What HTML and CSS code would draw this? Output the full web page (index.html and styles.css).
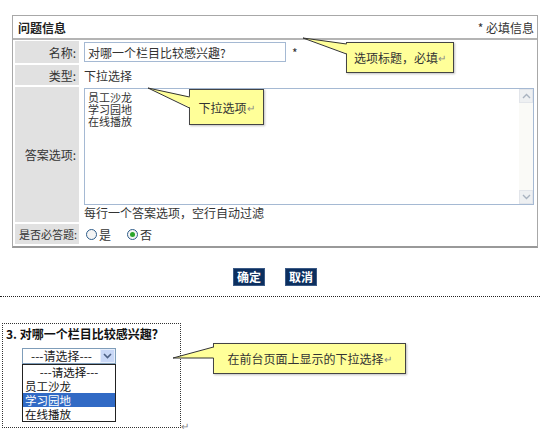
FILE: index.html
```html
<!DOCTYPE html>
<html lang="zh-CN">
<head>
    <meta charset="UTF-8">
    <title>问题信息</title>
    <link rel="stylesheet" href="styles.css">
</head>
<body>
    <div class="page">
        <div class="panel">
            <div class="panel-head">
                <span class="panel-title">问题信息</span>
                <span class="panel-note">* 必填信息</span>
            </div>
            <div class="form-grid">
                <div class="label">名称:</div>
                <div class="value">
                    <input class="text-input" type="text" value="对哪一个栏目比较感兴趣?">
                    <span class="req">*</span>
                </div>

                <div class="label">类型:</div>
                <div class="value">下拉选择</div>

                <div class="label">答案选项:</div>
                <div class="value value-area">
                    <div class="textarea">
                        <div class="textarea-text">
                            <div class="line">员工沙龙</div>
                            <div class="line">学习园地</div>
                            <div class="line">在线播放</div>
                        </div>
                        <div class="scrollbar">
                            <span class="scroll-btn">
                                <svg width="9" height="6" viewBox="0 0 9 6"><path d="M1 5 L4.5 1.5 L8 5" fill="none" stroke="#a9b3c0" stroke-width="1.4"/></svg>
                            </span>
                            <span class="scroll-track"></span>
                            <span class="scroll-btn">
                                <svg width="9" height="6" viewBox="0 0 9 6"><path d="M1 1 L4.5 4.5 L8 1" fill="none" stroke="#a9b3c0" stroke-width="1.4"/></svg>
                            </span>
                        </div>
                    </div>
                    <div class="hint">每行一个答案选项，空行自动过滤</div>
                </div>

                <div class="label label-long">是否必答题:</div>
                <div class="value radios">
                    <span class="radio"></span><span class="radio-text">是</span>
                    <span class="radio checked"></span><span class="radio-text">否</span>
                </div>
            </div>
        </div>

        <div class="actions">
            <button class="btn">确定</button>
            <button class="btn">取消</button>
        </div>

        <div class="divider"></div>

        <div class="preview">
            <div class="preview-title">3. 对哪一个栏目比较感兴趣？</div>
            <div class="select">
                <span class="select-text">---请选择---</span>
                <span class="select-arrow">
                    <svg width="9" height="6" viewBox="0 0 9 6"><path d="M1 1 L4.5 4.5 L8 1" fill="none" stroke="#4d6185" stroke-width="1.6"/></svg>
                </span>
            </div>
            <ul class="select-list">
                <li>---请选择---</li>
                <li>员工沙龙</li>
                <li class="selected">学习园地</li>
                <li>在线播放</li>
            </ul>
        </div>
        <span class="para-mark">↵</span>

        <!-- callouts -->
        <div class="callout callout-title">选项标题，必填<span class="mark">↵</span></div>
        <div class="callout callout-options">下拉选项<span class="mark">↵</span></div>
        <div class="callout callout-front">在前台页面上显示的下拉选择<span class="mark">↵</span></div>
        <svg class="pointers" width="540" height="433" viewBox="0 0 540 433">
            <polygon points="303,38 348,44 348,54" fill="#ffff99"/>
            <polyline points="346.5,44 303,38 346.5,54" fill="none" stroke="#333" stroke-width="1"/>
            <polygon points="148,88 191,97 191,108" fill="#ffff99"/>
            <polyline points="189.5,97 148,88 189.5,108" fill="none" stroke="#333" stroke-width="1"/>
            <polygon points="173,358 215,347 215,358" fill="#ffff99"/>
            <polyline points="213.5,347 173,358 213.5,358" fill="none" stroke="#333" stroke-width="1"/>
        </svg>
    </div>
</body>
</html>
```

FILE: styles.css
```css
body {
    margin: 0;
    font-family: "Noto Sans CJK SC", "Liberation Sans", sans-serif;
    font-size: 12px;
    color: #333;
    background: #fff;
}

.page {
    position: relative;
    width: 540px;
    height: 433px;
    padding-top: 15px;
    box-sizing: border-box;
    overflow: hidden;
}

/* form panel */
.panel {
    margin-left: 12px;
    width: 526px;
    box-sizing: border-box;
    border: 1px solid #a8a8a8;
    border-bottom: 2px solid #999;
}

.panel-head {
    display: flex;
    justify-content: space-between;
    align-items: center;
    height: 22px;
    padding: 0 3px 0 5px;
    border-bottom: 2px solid #b4b4b4;
}

.panel-title {
    font-weight: bold;
    color: #222;
}

.form-grid {
    display: grid;
    grid-template-columns: 64px 1fr;
    grid-template-rows: 22px 20px 135px 20px;
    gap: 2px;
    padding: 1px 2px 2px;
}

.label {
    background: #e1e1e1;
    display: flex;
    align-items: center;
    justify-content: flex-end;
    padding-right: 3px;
    white-space: nowrap;
}

.label-long {
    font-size: 11px;
    padding-right: 2px;
}

.value {
    display: flex;
    align-items: center;
    padding-left: 3px;
}

.text-input {
    width: 202px;
    height: 20px;
    box-sizing: border-box;
    border: 1px solid #a5b9d3;
    padding: 0 3px;
    font: inherit;
    color: #333;
    outline: none;
}

.req {
    margin-left: 6px;
}

.value-area {
    flex-direction: column;
    align-items: flex-start;
    padding-top: 1px;
}

.textarea {
    display: flex;
    width: 450px;
    height: 117px;
    box-sizing: border-box;
    border: 1px solid #a5b9d3;
}

.textarea-text {
    flex: 1;
    padding: 2px 3px;
    font-size: 11px;
}

.textarea-text .line {
    height: 12px;
    line-height: 12px;
}

.scrollbar {
    width: 14px;
    display: flex;
    flex-direction: column;
    background: #fafaf7;
}

.scroll-btn {
    height: 14px;
    display: flex;
    align-items: center;
    justify-content: center;
    background: #eef0f2;
    border: 1px solid #e2e5ea;
    box-sizing: border-box;
}

.scroll-track {
    flex: 1;
}

.hint {
    margin-top: 1px;
    line-height: 14px;
}

.radios {
    gap: 2px;
}

.radio {
    width: 11px;
    height: 11px;
    box-sizing: border-box;
    border: 1px solid #2f5d8a;
    border-radius: 50%;
    background: #f4f4f4;
    display: flex;
    align-items: center;
    justify-content: center;
    margin-left: 2px;
}

.radio.checked::after {
    content: "";
    width: 5px;
    height: 5px;
    border-radius: 50%;
    background: #2aa52a;
}

.radio-text {
    margin-right: 12px;
}

/* buttons */
.actions {
    display: flex;
    gap: 20px;
    padding-left: 233px;
    margin-top: 20px;
}

.btn {
    height: 18px;
    width: 32px;
    padding: 0;
    border: 1px solid #3b5a86;
    background: #0c2f5f;
    color: #fff;
    font: bold 12px "Noto Sans CJK SC", sans-serif;
    line-height: 16px;
}

.divider {
    margin-top: 10px;
    border-top: 1px dotted #222;
}

/* front-end preview */
.preview {
    margin: 26px 0 0 2px;
    width: 179px;
    height: 105px;
    box-sizing: border-box;
    border: 1px dotted #333;
    padding: 2px 0 0 3px;
}

.preview-title {
    font-weight: bold;
    color: #111;
    line-height: 16px;
}

.select {
    display: flex;
    margin: 6px 0 0 16px;
    width: 94px;
    height: 16px;
    box-sizing: border-box;
    border: 1px solid #7f9db9;
}

.select-text {
    flex: 1;
    text-align: center;
    line-height: 14px;
    color: #222;
}

.select-arrow {
    width: 15px;
    display: flex;
    align-items: center;
    justify-content: center;
    background: #c9d8f7;
    border: 1px solid #e6eefc;
    box-sizing: border-box;
}

.select-list {
    list-style: none;
    margin: 0 0 0 16px;
    padding: 0;
    width: 94px;
    box-sizing: border-box;
    border: 1px solid #222;
    color: #111;
    font-size: 11.5px;
}

.select-list li {
    height: 14px;
    line-height: 14px;
    padding-left: 2px;
}

.select-list li:first-child {
    text-align: center;
    padding-left: 0;
}

.select-list .selected {
    background: #316ac5;
    color: #fff;
}

.para-mark {
    position: absolute;
    left: 181px;
    top: 418px;
    font-size: 10px;
    color: #888;
}

/* callout boxes */
.callout {
    position: absolute;
    box-sizing: border-box;
    background: #ffff99;
    border: 1px solid #444;
    box-shadow: 1px 1px 2px rgba(0, 0, 0, 0.25);
    display: flex;
    align-items: center;
    justify-content: center;
    color: #333;
    white-space: nowrap;
}

.callout .mark {
    font-size: 10px;
    color: #888;
}

.callout-title {
    left: 346px;
    top: 42px;
    width: 108px;
    height: 31px;
}

.callout-options {
    left: 189px;
    top: 89px;
    width: 75px;
    height: 36px;
}

.callout-front {
    left: 213px;
    top: 343px;
    width: 193px;
    height: 31px;
}

.pointers {
    position: absolute;
    left: 0;
    top: 0;
    pointer-events: none;
}
```
